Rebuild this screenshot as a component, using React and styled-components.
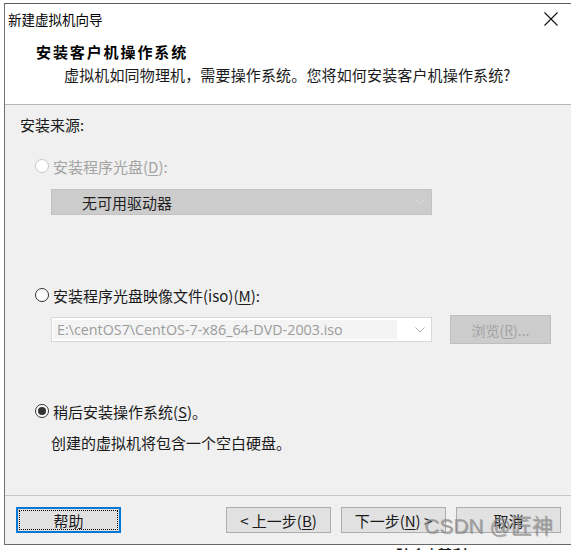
import React from 'react';
import styled, { createGlobalStyle } from 'styled-components';

const GlobalStyle = createGlobalStyle`
  html, body {
    margin: 0;
    padding: 0;
    background: #ffffff;
  }
  #root {
    width: 571px;
    height: 550px;
    overflow: hidden;
  }
`;

const Page = styled.div`
  position: relative;
  width: 571px;
  height: 550px;
  box-sizing: border-box;
  padding: 3px 0 0 4px;
  overflow: hidden;
  background: #ffffff;
  font-family: "Noto Sans CJK SC", "Noto Sans", sans-serif;
  color: #1a1a1a;
`;

const Window = styled.div`
  width: 567px;
  height: 542px;
  box-sizing: border-box;
  border-top: 1px solid #5c5c5c;
  border-left: 1px solid #707070;
  border-bottom: 1px solid #6a6a6a;
  display: flex;
  flex-direction: column;
  background: #ffffff;
`;

const TitleBar = styled.div`
  height: 30px;
  flex: none;
  display: flex;
  align-items: center;
  justify-content: space-between;
  padding: 0 13px 0 3px;
  font-size: 13.5px;
  line-height: 18px;
  color: #000;
`;

const Header = styled.div`
  height: 71px;
  flex: none;
  box-sizing: border-box;
  padding: 8px 0 0 31px;
  border-bottom: 1px solid #b4b4b4;
  display: flex;
  flex-direction: column;
  gap: 3px;
`;

const HeaderTitle = styled.div`
  font-size: 15px;
  line-height: 20px;
  font-weight: 700;
  letter-spacing: 1.9px;
  color: #000;
`;

const HeaderText = styled.div`
  padding-left: 28px;
  font-size: 15px;
  line-height: 20px;
  letter-spacing: 0.15px;
  color: #1a1a1a;
`;

const Body = styled.div`
  height: 390px;
  flex: none;
  box-sizing: border-box;
  background: #f0f0f0;
  padding: 10px 0 0 15px;
  display: flex;
  flex-direction: column;
`;

const Label = styled.div`
  font-size: 15px;
  line-height: 20px;
  margin-top: ${(p) => p.$top || 0}px;
  padding-left: ${(p) => p.$indent || 0}px;
  color: ${(p) => (p.$disabled ? '#a3a3a3' : '#1a1a1a')};
`;

const RadioRow = styled.label`
  display: flex;
  align-items: center;
  gap: 4px;
  height: 20px;
  margin-top: ${(p) => p.$top}px;
  padding-left: 15px;
  font-size: 15px;
  color: ${(p) => (p.$disabled ? '#a3a3a3' : '#1a1a1a')};
`;

const RadioDot = styled.span`
  width: 14px;
  height: 14px;
  box-sizing: border-box;
  border-radius: 50%;
  border: 1px solid ${(p) => (p.$disabled ? '#c6c6c6' : '#333333')};
  background: #ffffff;
  display: flex;
  align-items: center;
  justify-content: center;
  &::after {
    content: '';
    display: ${(p) => (p.$checked ? 'block' : 'none')};
    width: 8px;
    height: 8px;
    border-radius: 50%;
    background: #333333;
  }
`;

const Key = styled.span`
  text-decoration: underline;
  text-underline-offset: 2px;
`;

const ComboRow = styled.div`
  display: flex;
  align-items: center;
  gap: 18px;
  margin-top: ${(p) => p.$top}px;
  padding-left: 31px;
`;

const Combo = styled.div`
  width: 381px;
  height: ${(p) => (p.$disabled ? 26 : 25)}px;
  box-sizing: border-box;
  display: flex;
  align-items: center;
  border: 1px solid ${(p) => (p.$disabled ? '#c2c2c2' : '#d9d9d9')};
  background: ${(p) => (p.$disabled ? '#cccccc' : '#ffffff')};
  padding-right: 6px;
`;

const ComboText = styled.span`
  flex: 1;
  align-self: stretch;
  display: flex;
  align-items: center;
  margin: 2px 18px 2px 1px;
  padding-left: ${(p) => (p.$file ? 4 : 29)}px;
  background: ${(p) => (p.$file ? '#f4f4f4' : 'transparent')};
  font-family: ${(p) => (p.$file ? '"Open Sans", "Noto Sans", sans-serif' : 'inherit')};
  font-size: ${(p) => (p.$file ? 14.3 : 15)}px;
  color: ${(p) => (p.$file ? '#9c9c9c' : '#1f1f1f')};
  white-space: nowrap;
`;

const Browse = styled.div`
  width: 101px;
  height: 29px;
  box-sizing: border-box;
  border: 1px solid #bfbfbf;
  background: #cccccc;
  color: #a3a3a3;
  font-size: 14px;
  display: flex;
  align-items: center;
  justify-content: center;
`;

const Footer = styled.div`
  flex: 1;
  background: #f0f0f0;
  border-top: 1px solid #c6c6c6;
  box-sizing: border-box;
  padding: 11px 0 0 11px;
  display: flex;
  align-items: flex-start;
`;

const Button = styled.div`
  width: 105px;
  height: 26px;
  box-sizing: border-box;
  margin-left: ${(p) => p.$gap || 0}px;
  position: relative;
  display: flex;
  align-items: center;
  justify-content: center;
  background: #e1e1e1;
  border: ${(p) => (p.$focus ? '2px solid #0078d7' : '1px solid #adadad')};
  font-size: 15px;
  color: #1a1a1a;
  &::after {
    content: '';
    display: ${(p) => (p.$focus ? 'block' : 'none')};
    position: absolute;
    inset: 1px;
    border: 1px dotted #000;
  }
`;

const Watermark = styled.div`
  position: absolute;
  left: 424px;
  top: 513px;
  font-family: "Liberation Sans", "Noto Sans CJK SC", sans-serif;
  font-size: 21px;
  line-height: 26px;
  color: rgba(150, 150, 150, 0.75);
  text-shadow: 1px 1px 0 rgba(90, 90, 90, 0.45);
  pointer-events: none;
`;

const Backdrop = styled.div`
  position: absolute;
  left: 396px;
  top: 545px;
  height: 5px;
  overflow: hidden;
  font-size: 15px;
  line-height: 20px;
  color: #1a1a1a;
  font-weight: 700;
`;

const Chevron = ({ color }) => (
  <svg width="10" height="6" viewBox="0 0 10 6">
    <polyline points="0.5,0.5 5,5 9.5,0.5" fill="none" stroke={color} strokeWidth="1" />
  </svg>
);

const CloseIcon = () => (
  <svg width="14" height="14" viewBox="0 0 14 14">
    <path d="M0.5 0.5 L13.5 13.5 M13.5 0.5 L0.5 13.5" stroke="#111" strokeWidth="1.1" />
  </svg>
);

export default function App() {
  return (
    <Page>
      <GlobalStyle />
      <Window>
        <TitleBar>
          <span>新建虚拟机向导</span>
          <CloseIcon />
        </TitleBar>
        <Header>
          <HeaderTitle>安装客户机操作系统</HeaderTitle>
          <HeaderText>虚拟机如同物理机，需要操作系统。您将如何安装客户机操作系统?</HeaderText>
        </Header>
        <Body>
          <Label>安装来源:</Label>
          <RadioRow $top={21} $disabled>
            <RadioDot $disabled />
            <span>安装程序光盘(<Key>D</Key>):</span>
          </RadioRow>
          <ComboRow $top={13}>
            <Combo $disabled>
              <ComboText>无可用驱动器</ComboText>
              <Chevron color="#dcdcdc" />
            </Combo>
          </ComboRow>
          <RadioRow $top={70}>
            <RadioDot />
            <span>安装程序光盘映像文件(iso)(<Key>M</Key>):</span>
          </RadioRow>
          <ComboRow $top={10}>
            <Combo>
              <ComboText $file>E:\centOS7\CentOS-7-x86_64-DVD-2003.iso</ComboText>
              <Chevron color="#b0b0b0" />
            </Combo>
            <Browse>浏览(<Key>R</Key>)...</Browse>
          </ComboRow>
          <RadioRow $top={57}>
            <RadioDot $checked />
            <span>稍后安装操作系统(<Key>S</Key>)。</span>
          </RadioRow>
          <Label $top={12} $indent={31}>创建的虚拟机将包含一个空白硬盘。</Label>
        </Body>
        <Footer>
          <Button $focus>帮助</Button>
          <Button $gap={105}>&lt; 上一步(<Key>B</Key>)</Button>
          <Button $gap={10}>下一步(<Key>N</Key>) &gt;</Button>
          <Button $gap={10}>取消</Button>
        </Footer>
      </Window>
      <Backdrop>陆会 | 基利</Backdrop>
      <Watermark>CSDN @匠神</Watermark>
    </Page>
  );
}
